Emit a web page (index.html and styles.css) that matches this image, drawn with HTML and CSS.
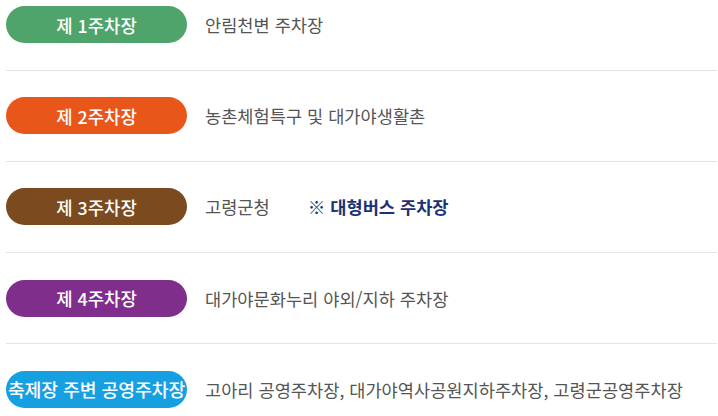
FILE: index.html
```html
<!DOCTYPE html>
<html lang="ko">
<head>
<meta charset="utf-8">
<link rel="stylesheet" href="styles.css">
</head>
<body>
<ul class="parking">
  <li class="row">
    <span class="badge green">제 1주차장</span>
    <span class="desc">안림천변 주차장</span>
  </li>
  <li class="row">
    <span class="badge orange">제 2주차장</span>
    <span class="desc">농촌체험특구 및 대가야생활촌</span>
  </li>
  <li class="row">
    <span class="badge brown">제 3주차장</span>
    <span class="desc">고령군청</span>
    <span class="note">※ 대형버스 주차장</span>
  </li>
  <li class="row">
    <span class="badge purple">제 4주차장</span>
    <span class="desc">대가야문화누리 야외/지하 주차장</span>
  </li>
  <li class="row">
    <span class="badge blue">축제장 주변 공영주차장</span>
    <span class="desc">고아리 공영주차장, 대가야역사공원지하주차장, 고령군공영주차장</span>
  </li>
</ul>
</body>
</html>
```
FILE: styles.css
```css
html, body {
  margin: 0;
  padding: 0;
  background: #ffffff;
}
body {
  font-family: "Noto Sans CJK KR", "Noto Sans", sans-serif;
}
.parking {
  list-style: none;
  margin: 0;
  padding: 6px 1px 0 6px;
}
.row {
  display: flex;
  align-items: center;
  padding: 26.6px 0;
  border-bottom: 1px solid #e4e4e4;
}
.row:first-child {
  padding-top: 0;
}
.row:last-child {
  border-bottom: none;
}
.badge {
  flex: 0 0 181px;
  height: 37px;
  border-radius: 19px;
  display: flex;
  align-items: center;
  justify-content: center;
  color: #ffffff;
  font-size: 17.8px;
  font-weight: 500;
  white-space: nowrap;
}
.green { background: #4fa46c; }
.orange { background: #e9561a; }
.brown { background: #7b4a1f; }
.purple { background: #7f2e8c; }
.blue {
  background: #16a0e2;
  font-size: 18.3px;
  letter-spacing: -0.1px;
}
.desc {
  margin-left: 18px;
  font-size: 17.6px;
  color: #555555;
  white-space: nowrap;
}
.note {
  margin-left: 38px;
  font-size: 17.6px;
  font-weight: 700;
  color: #1d3275;
  white-space: nowrap;
}
```
